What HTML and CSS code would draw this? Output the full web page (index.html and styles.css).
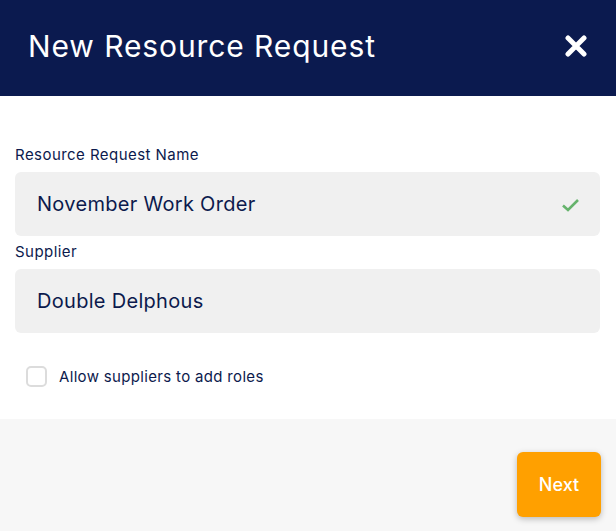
FILE: index.html
```html
<!DOCTYPE html>
<html lang="en">
<head>
  <meta charset="UTF-8">
  <title>New Resource Request</title>
  <link rel="stylesheet" href="styles.css">
</head>
<body>
  <div class="modal">
    <header class="modal-header">
      <h1>New Resource Request</h1>
      <button class="close-button" aria-label="Close">
        <svg width="24" height="22" viewBox="0 0 24 22">
          <path d="M4 3 L20 19 M20 3 L4 19" stroke="white" stroke-width="5" stroke-linecap="round"/>
        </svg>
      </button>
    </header>
    <main class="modal-body">
      <label class="field-label">Resource Request Name</label>
      <div class="field">
        <span>November Work Order</span>
        <svg class="check" width="20" height="16" viewBox="0 0 20 16">
          <path d="M2 8.5 L7 13 L17 3" fill="none" stroke="#66b36c" stroke-width="2.6"/>
        </svg>
      </div>
      <label class="field-label">Supplier</label>
      <div class="field">
        <span>Double Delphous</span>
      </div>
      <label class="checkbox-row">
        <span class="checkbox"></span>
        Allow suppliers to add roles
      </label>
    </main>
    <footer class="modal-footer">
      <button class="next-button">Next</button>
    </footer>
  </div>
</body>
</html>
```
FILE: styles.css
```css
* {
  box-sizing: border-box;
}

html, body {
  margin: 0;
  padding: 0;
  height: 100%;
  font-family: Inter, Roboto, sans-serif;
  color: #0c1a4d;
}

.modal {
  display: flex;
  flex-direction: column;
  height: 100%;
}

.modal-header {
  background-color: #0b1a4f;
  height: 96px;
  display: flex;
  align-items: center;
  justify-content: space-between;
  padding: 0 28px 0 28px;
}

.modal-header h1 {
  margin: 0;
  color: white;
  font-size: 30px;
  font-weight: 400;
  letter-spacing: 0.9px;
  padding-bottom: 4px;
}

.close-button {
  background: none;
  border: none;
  padding: 0;
  display: flex;
  cursor: pointer;
  margin-bottom: 4px;
}

.modal-body {
  background: white;
  padding: 50px 16px 32px 15px;
  display: flex;
  flex-direction: column;
}

.field-label {
  font-size: 15px;
  line-height: 18px;
  letter-spacing: 0.45px;
  margin-bottom: 8px;
}

.field {
  background-color: #f0f0f0;
  border-radius: 6px;
  height: 64px;
  display: flex;
  align-items: center;
  justify-content: space-between;
  padding: 0 19px 0 22px;
  font-size: 20px;
  letter-spacing: 0.3px;
  margin-bottom: 7px;
}

.check {
  margin-top: 2px;
}

.checkbox-row {
  display: flex;
  align-items: center;
  gap: 12px;
  font-size: 15px;
  letter-spacing: 0.33px;
  margin: 26px 0 0 11px;
}

.checkbox {
  width: 21px;
  height: 21px;
  border: 2px solid #dcdcdc;
  border-radius: 5px;
  background: white;
}

.modal-footer {
  flex: 1;
  background-color: #f7f7f7;
  display: flex;
  justify-content: flex-end;
  align-items: flex-start;
  padding: 33px 15px 0 0;
}

.next-button {
  background-color: #ffa000;
  color: white;
  border: none;
  border-radius: 6px;
  width: 84px;
  height: 65px;
  font-family: Inter, Roboto, sans-serif;
  font-size: 18px;
  font-weight: 500;
  box-shadow: 0 2px 6px rgba(0, 0, 0, 0.25);
  cursor: pointer;
}
```
